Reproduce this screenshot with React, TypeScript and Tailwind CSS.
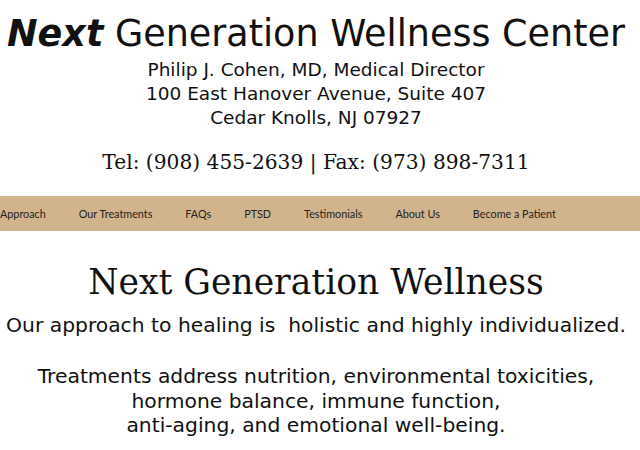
import React from 'react';

const navItems = [
  'Approach',
  'Our Treatments',
  'FAQs',
  'PTSD',
  'Testimonials',
  'About Us',
  'Become a Patient',
];

const App: React.FC = () => {
  return (
    <div className="min-h-screen bg-white text-[#111] font-['DejaVu_Sans',sans-serif]">
      <header className="text-center pt-[12px] pr-[8px]">
        <h1 className="text-[36.5px] leading-[44px] whitespace-nowrap">
          <em className="font-bold">Next</em> Generation Wellness Center
        </h1>
        <div className="text-[18.5px] leading-[24px] mt-[2px]">
          <p>Philip J. Cohen, MD, Medical Director</p>
          <p>100 East Hanover Avenue, Suite 407</p>
          <p>Cedar Knolls, NJ 07927</p>
        </div>
        <p className="font-['DejaVu_Serif',serif] text-[20.2px] leading-[28px] mt-[18px]">
          Tel: (908) 455-2639 | Fax: (973) 898-7311
        </p>
      </header>

      <nav className="mt-[20px] bg-[#d2b48c] h-[35px] flex items-center pt-[2px]">
        <ul className="flex items-center gap-[33px] font-['Lato',sans-serif] text-[10.8px] text-[#222]">
          {navItems.map((item) => (
            <li key={item}>
              <a href="#">{item}</a>
            </li>
          ))}
        </ul>
      </nav>

      <main className="text-center pt-[29px] pr-[8px]">
        <h2 className="font-['DejaVu_Serif',serif] text-[34.6px] leading-[44px]">
          Next Generation Wellness
        </h2>
        <p className="text-[20.3px] leading-[24px] mt-[9px] whitespace-pre">
          Our approach to healing is  holistic and highly individualized.
        </p>
        <p className="text-[20.3px] leading-[24.5px] mt-[27px]">
          Treatments address nutrition, environmental toxicities,
          <br />
          hormone balance, immune function,
          <br />
          anti-aging, and emotional well-being.
        </p>
      </main>
    </div>
  );
};

export default App;
